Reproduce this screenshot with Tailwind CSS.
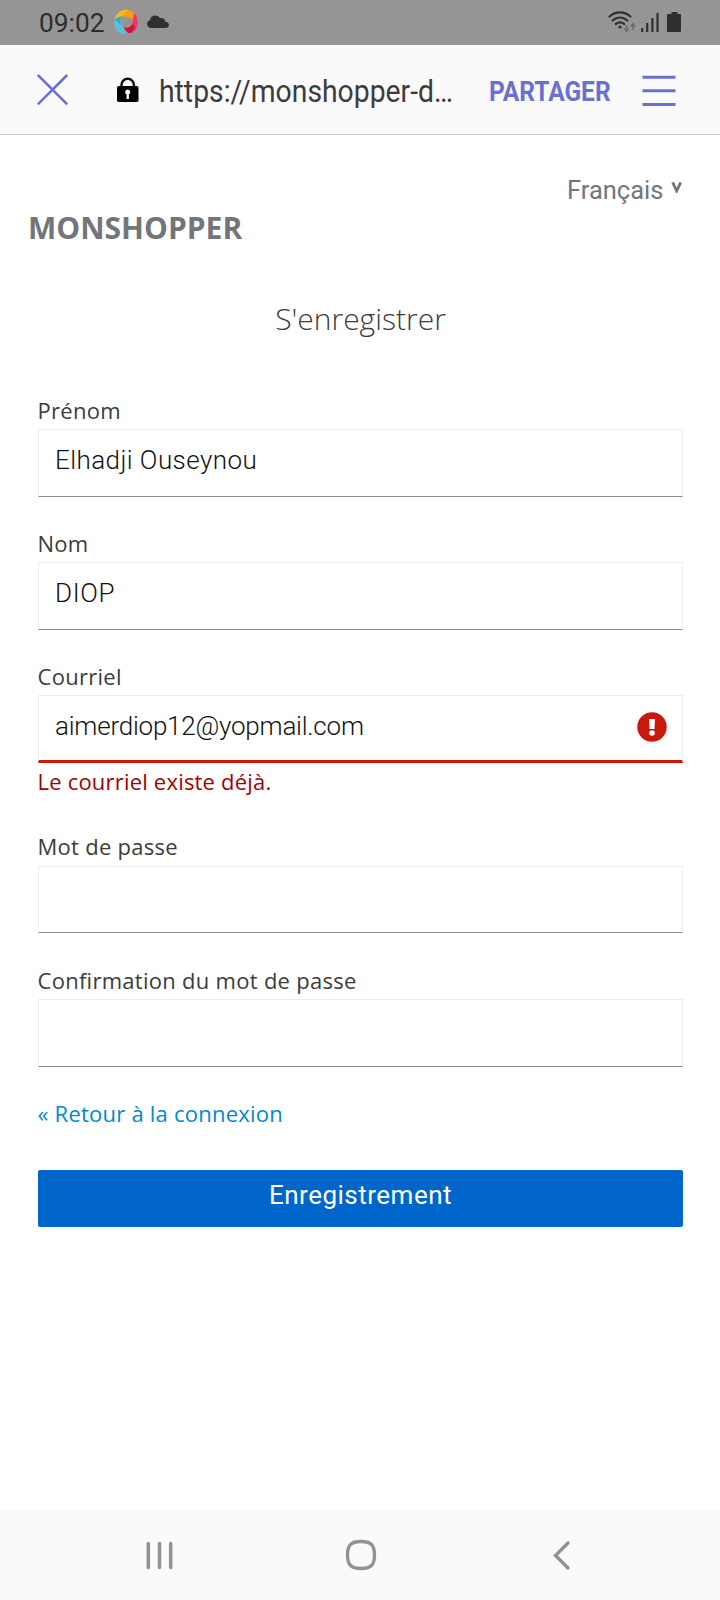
<!DOCTYPE html>
<html lang="fr"><head><meta charset="utf-8"><title>MONSHOPPER</title>
<script src="https://cdn.jsdelivr.net/npm/@tailwindcss/browser@4"></script></head>
<body class="w-[720px] h-[1600px] overflow-hidden bg-white flex flex-col font-['Open_Sans',sans-serif] text-[#3c3c3c]">
<header class="h-[45px] shrink-0 bg-[#959595] flex items-start text-[#2d2d2d] font-['Roboto',sans-serif]">
  <span class="ml-[39px] w-[75px] text-[26px] leading-[46px] whitespace-nowrap"><span class="inline-block origin-left scale-x-[1.01]">09:02</span></span>
  <svg class="mt-[9px] w-[25px] h-[26px]" viewBox="0 0 25 26"><path d="M1 9C3 3 9 0 14 1l5 4-1 5C14 6 8 7 1 10Z" fill="#fdb913"/><path d="M14 1c3 1 5 2 7 5l-2 5-6-4-5 0Z" fill="#ff9c08"/><path d="M20 4c6 6 5 17-3 20l-7-5c5 1 9-3 9-9Z" fill="#f0356e"/><path d="M10 18c3 2 7 0 9-3l2 4-4 5-5 0Z" fill="#cf1440"/><path d="M1 10 8 7c-2 6 0 12 6 17C5 27-2 19 1 10Z" fill="#5bc0dc"/><path d="M1 10 8 7c-2 3-2 6-1 9Z" fill="#35a5c0"/></svg>
  <svg class="mt-[15px] ml-[6px] w-[25px] h-[14px]" viewBox="0 0 23 14" preserveAspectRatio="none" fill="#303030"><path d="M5 13a4.200 4.200 0 0 1-.3-8C5 2 7 .6 9.500 .6c2 0 3.600 1 4.300 2.600 2.600-.6 4.600 1 4.900 3.500 2 .2 3.300 1.500 3.300 3.300 0 2-1.500 3-3 3Z"/></svg>
  <svg class="mt-[11px] ml-auto mr-[38px] w-[75px] h-[23px]" viewBox="0 0 75 23" fill="none" stroke="#303030" stroke-width="2.200"><path d="M2.500 5.500c6.200-5.600 14.800-5.600 21 0M5.600 9.500c4.500-3.800 10.300-3.800 14.800 0M8.800 13c2.700-2 5.800-2 8.400 0" stroke-linecap="round"/><circle cx="13" cy="16" r="1.600" fill="#303030" stroke="none"/><path d="M19.500 14v6m-2.200-2.500 2.200 2.500 2.200-2.500M26 19v-6m-2.200 2.500L26 13l2.200 2.500" stroke="#6b6b6b" stroke-width="1.500"/><path d="M35.200 17v4M40.200 12v9M45.400 7v14M50.500 2v19" stroke-width="2.200"/><path d="M61 3h3.500V1h6v2H73q1 0 1 1v16q0 1-1 1H61q-1 0-1-1V4q0-1 1-1Z" fill="#303030" stroke="none"/></svg>
</header>
<nav class="h-[90px] shrink-0 bg-[#fafafa] border-b border-[#c8c8c8] flex items-start font-['Roboto',sans-serif]">
  <svg class="mt-[29px] ml-[37px] w-[32px] h-[32px]" viewBox="0 0 32 32" stroke="#6870d2" stroke-width="2.500"><path d="M.800 1 30.200 30.400M30.200 1 .800 30.400"/></svg>
  <svg class="mt-[32px] ml-[47px] w-[24px] h-[26px]" viewBox="0 0 24 26"><path d="M5.500 10V8a6.200 6.200 0 0 1 12.400 0v2" fill="none" stroke="#111" stroke-width="2.500"/><rect x="1" y="9" width="21.500" height="16" rx="1.800"/><path d="M11.700 12.500a2.600 2.600 0 0 1 1.200 4.900V22h-2.400v-4.600A2.600 2.600 0 0 1 11.700 12.500Z" fill="#fafafa"/></svg>
  <span class="ml-[19px] w-[330px] text-[32px] leading-[92px] whitespace-nowrap text-[#3c3c3c]"><span class="inline-block origin-left scale-x-[0.885]">https://monshopper-d…</span></span>
  <span class="w-[152px] text-[28px] font-bold leading-[93px] whitespace-nowrap text-[#6870d2]"><span class="inline-block origin-left scale-x-[0.875]">PARTAGER</span></span>
  <svg class="mt-[30px] w-[35px] h-[34px]" viewBox="0 0 35 34" fill="#6870d2"><path d="M1.500 .8h33v3h-33zM1.500 14.300h33v3h-33zM1.500 28h33v3h-33z"/></svg>
</nav>
<main class="grow flex flex-col pl-[38px] pr-[37px]">
  <div class="mt-[38px] h-[34px] flex justify-end text-[26px] leading-[34px] text-[#72767b] font-['Roboto',sans-serif]"><span class="w-[104px] whitespace-nowrap"><span class="inline-block origin-left scale-x-[0.98]">Français</span></span>
  <svg class="mt-[9px] w-[12px] h-[11px]" viewBox="0 0 12 11" fill="none" stroke="#72767b" stroke-width="2.800"><path d="M1.700 .3 5.700 9 9.700 .3"/></svg></div>
  <div class="-ml-[10px] mt-[1px] h-[40px] text-[30px] leading-[40px] font-bold text-[#72767b] whitespace-nowrap"><span class="inline-block origin-left">MONSHOPPER</span></div>
  <h1 class="mt-[51px] h-[40px] text-center text-[30px] leading-[40px] font-light whitespace-nowrap"><span class="inline-block">S'enregistrer</span></h1>
  <label class="-ml-[.5px] mt-[56px] h-[34px] text-[22px] leading-[31px] tracking-[.28px] whitespace-nowrap">Prénom</label>
  <div class="h-[68px] border border-[#ededed] border-b-[#8b8d8f] px-[16px] text-[26px] leading-[60px] tracking-[.43px] font-light text-[#111] font-['Roboto',sans-serif] whitespace-nowrap">Elhadji Ouseynou</div>
  <label class="-ml-[.5px] mt-[31px] h-[34px] text-[22px] leading-[31px] tracking-[.28px] whitespace-nowrap">Nom</label>
  <div class="h-[68px] border border-[#ededed] border-b-[#8b8d8f] px-[16px] text-[26px] leading-[60px] tracking-[.6px] font-light text-[#111] font-['Roboto',sans-serif] whitespace-nowrap">DIOP</div>
  <label class="-ml-[.5px] mt-[31px] h-[34px] text-[22px] leading-[31px] tracking-[.28px] whitespace-nowrap">Courriel</label>
  <div class="h-[68px] border border-[#ededed] border-b-3 border-b-[#c9190b] pl-[16px] pr-[15px] flex justify-between text-[26px] leading-[60px] tracking-[-.22px] font-light text-[#111] font-['Roboto',sans-serif] whitespace-nowrap"><span>aimerdiop12@yopmail.com</span>
  <svg class="mt-[16px] w-[30px] h-[30px]" viewBox="0 0 30 30"><circle cx="15" cy="15" r="14.700" fill="#c9190b"/><path d="M12 7h6l-.5 10h-5z" fill="#fff"/><circle cx="15" cy="21" r="2.800" fill="#fff"/></svg></div>
  <p class="-ml-[.5px] mt-[3px] h-[31px] text-[22px] leading-[31px] tracking-[.2px] text-[#a30000] whitespace-nowrap">Le courriel existe déjà.</p>
  <label class="-ml-[.5px] mt-[34px] h-[35px] text-[22px] leading-[31px] tracking-[.28px] whitespace-nowrap">Mot de passe</label>
  <div class="h-[67px] border border-[#ededed] border-b-[#8b8d8f]"></div>
  <label class="-ml-[.5px] mt-[32px] h-[34px] text-[22px] leading-[31px] tracking-[.28px] whitespace-nowrap">Confirmation du mot de passe</label>
  <div class="h-[68px] border border-[#ededed] border-b-[#8b8d8f]"></div>
  <a class="-ml-[.5px] mt-[31px] h-[31px] text-[22px] leading-[31px] tracking-[.23px] text-[#0088ce] whitespace-nowrap">« Retour à la connexion</a>
  <button class="mt-[41px] h-[57px] pb-[6px] rounded-[2px] bg-[#06c] text-white text-[26px] leading-[51px] tracking-[.5px] font-['Roboto',sans-serif]">Enregistrement</button>
</main>
<footer class="h-[90px] shrink-0 bg-[#fafafa] flex items-center justify-between pl-[145px] pr-[150px]">
  <svg class="w-[30px] h-[30px]" viewBox="0 0 30 30" stroke="#929292" stroke-width="3.500" stroke-linecap="round"><path d="M3.300 3.500v24M14.500 3.500v24M25.700 3.500v24"/></svg>
  <svg class="mr-[6px] w-[32px] h-[32px]" viewBox="0 0 32 32" fill="none" stroke="#929292" stroke-width="3.300"><path d="M16 2.500c10 0 13.500 3.500 13.500 13.500S26 29.500 16 29.500 2.500 26 2.500 16 6 2.500 16 2.500Z"/></svg>
  <svg class="w-[18px] h-[30px]" viewBox="0 0 18 30" fill="none" stroke="#929292" stroke-width="3.300" stroke-linecap="round"><path d="M16 3 3.500 15.500 16 28"/></svg>
</footer>
</body></html>
